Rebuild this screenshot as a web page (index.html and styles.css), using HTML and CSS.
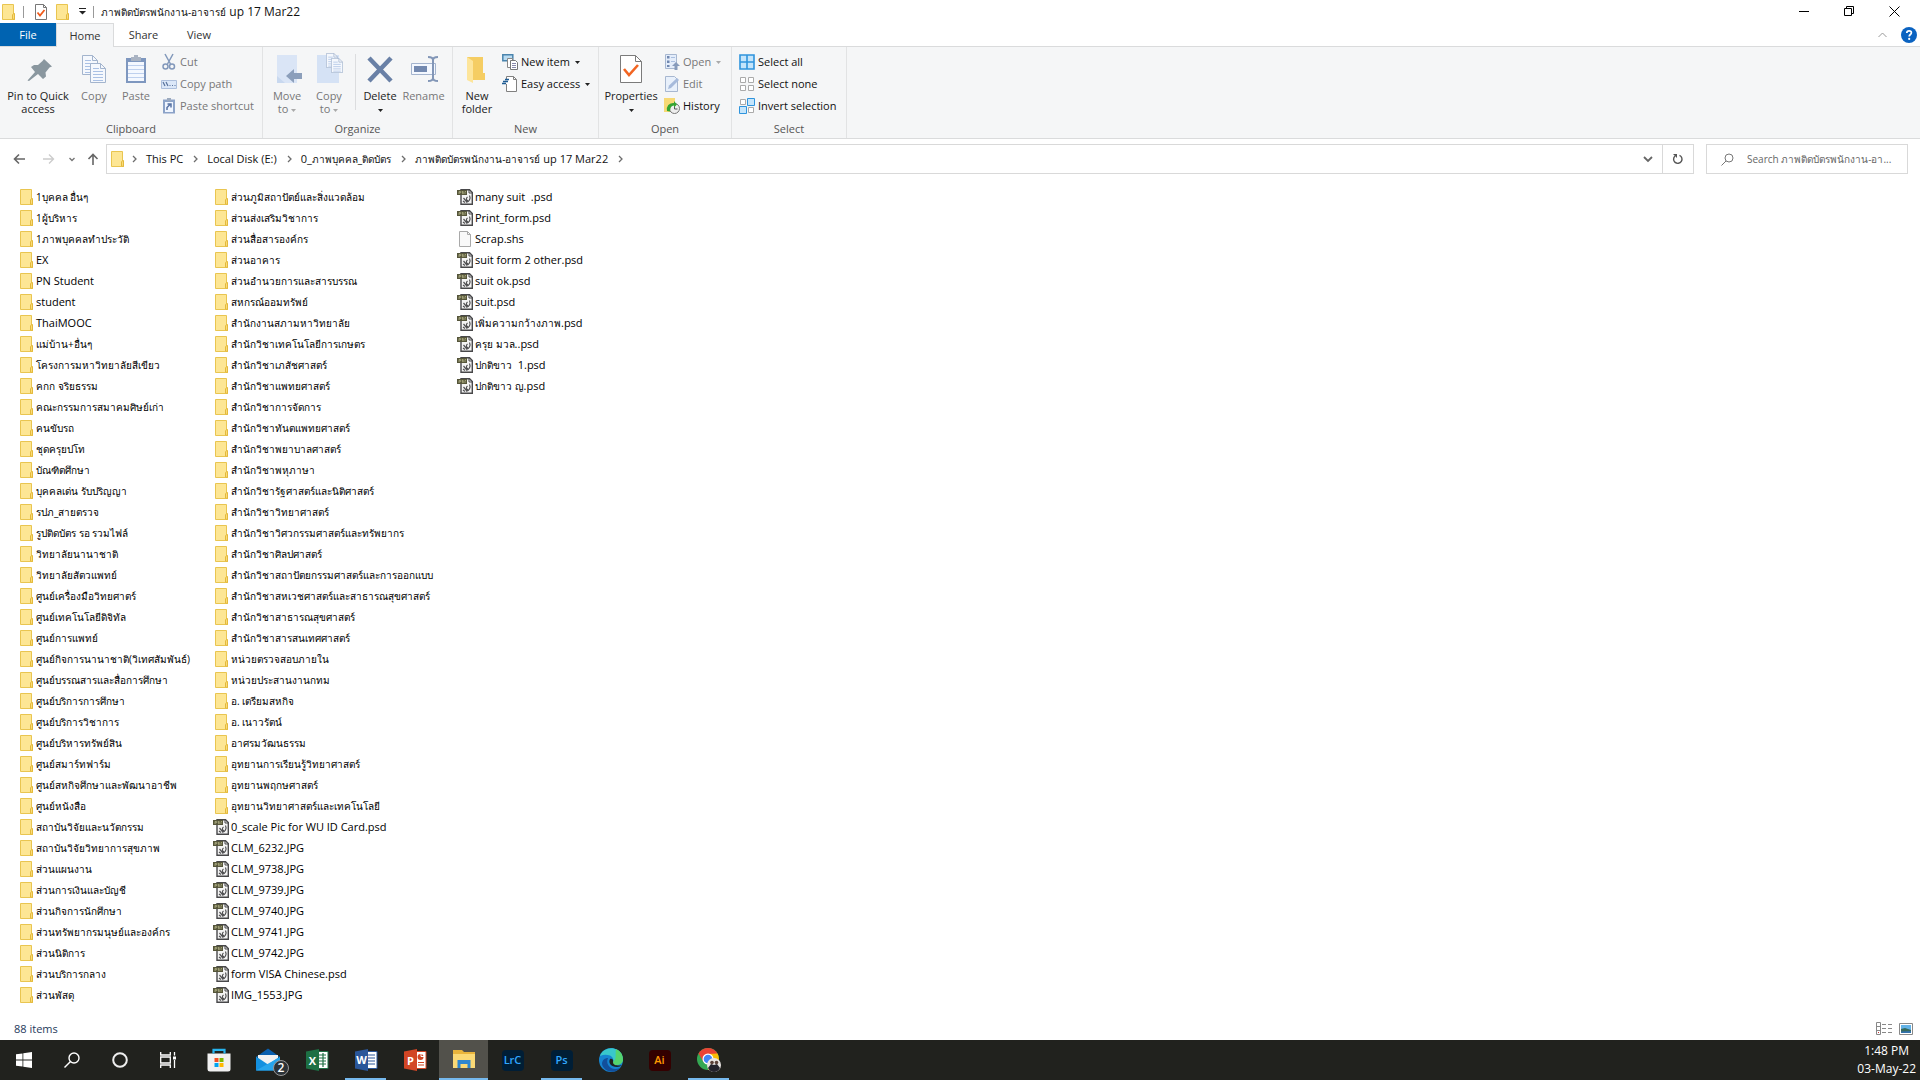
FILE: index.html
```html
<!DOCTYPE html>
<html lang="th">
<head>
<meta charset="utf-8">
<title>ภาพติดบัตรพนักงาน-อาจารย์ up 17 Mar22</title>
<link rel="stylesheet" href="styles.css">
</head>
<body>
<svg class="defs" aria-hidden="true">
  <symbol id="folder" viewBox="0 0 16 16"><path d="M2.5.5h11v12h1v3h-12z" fill="#fde694" stroke="#e9c550"/><path d="M12.5 15v-4l1-1.500h1v6z" fill="#fbdc78" stroke="#e3b93c"/></symbol>
  <symbol id="image" viewBox="0 0 16 16"><path d="M4 .7h8.500l2.800 2.800v11.800H4z" fill="#f4f4f4" stroke="#48484a" stroke-width="1.400"/><path d="M12 .7v3.300h3.300" fill="none" stroke="#48484a"/><path d="M0 1h10v5H0z" fill="#55553a"/><path d="M2 5V2.500h1.500v1.300H2M5 4.600h1.400V3.500H5V2.500h1.500M8 5V2.500M8 2.500h1" fill="none" stroke="#b9b98c" stroke-width=".7"/><path d="M6.500 9l2.500 3 1.500-.6M10.500 8c-2 1.500-1 3.500.5 3.500M12.500 6.500c1.500 3-.5 7-3.500 6.500M6 12l2 1.500" fill="none" stroke="#505052" stroke-width="1.200"/></symbol>
  <symbol id="blank" viewBox="0 0 16 16"><path d="M2.500.5h8l3 3v12h-11z" fill="#f9f9f9" stroke="#a9a9a9"/><path d="M10.500.5v3h3" fill="none" stroke="#a9a9a9"/></symbol>
  <symbol id="caret" viewBox="0 0 5 3"><path d="M0 0h5L2.500 3z"/></symbol>
  <symbol id="next" viewBox="0 0 6 8"><path d="M1 1l3 3-3 3" fill="none" stroke="#6d6d6d" stroke-width="1.300"/></symbol>
  <symbol id="sheet" viewBox="0 0 16 20"><path d="M.5.5h10l5 5v14H.5z" fill="#f5f8fd" stroke="#a3b4cd"/><path d="M10.500.5v5h5" fill="none" stroke="#a3b4cd"/><path d="M3 5.500h6M3 8.500h10M3 11.500h10M3 14.500h10M3 17.500h10" stroke="#a9c0e4"/></symbol>
</svg>

<header class="titlebar">
  <svg class="i16" viewBox="0 0 16 16"><use href="#folder"/></svg>
  <span class="rule"></span>
  <button class="plain" aria-label="Properties"><svg class="i16" viewBox="0 0 16 16"><path d="M3.500.5h8l3 3v12h-11z" fill="#fff" stroke="#777"/><path d="M11.500.5v3h3" fill="none" stroke="#777"/><path d="M5.500 8.500l2.500 3 4.500-5.500" fill="none" stroke="#f05a1a" stroke-width="1.800"/></svg></button>
  <button class="plain" aria-label="New folder"><svg class="i16" viewBox="0 0 16 16"><use href="#folder"/></svg></button>
  <button class="plain custom" aria-label="Customize toolbar"><svg width="7" height="7" viewBox="0 0 7 7"><path d="M0 .5h7" stroke="#222"/><path d="M0 3h7L3.500 6.500z" fill="#222"/></svg></button>
  <span class="rule"></span>
  <h1><span class="th">ภาพติดบัตรพนักงาน-อาจารย์</span> up 17 Mar22</h1>
  <div class="window-buttons">
    <button class="plain" aria-label="Minimize"><svg width="11" height="11" viewBox="0 0 11 11"><path d="M0 5.500h10" stroke="#000"/></svg></button>
    <button class="plain" aria-label="Restore"><svg width="11" height="11" viewBox="0 0 11 11" fill="none" stroke="#000"><path d="M.5 2.500h7v7h-7zM2.500 2.500v-2h7v7h-2"/></svg></button>
    <button class="plain" aria-label="Close"><svg width="11" height="11" viewBox="0 0 11 11"><path d="M.5.5l10 10M10.500.5l-10 10" stroke="#000"/></svg></button>
  </div>
</header>

<nav class="tabs">
  <button class="tab file">File</button>
  <button class="tab active">Home</button>
  <button class="tab">Share</button>
  <button class="tab view">View</button>
  <div class="tabs-end">
    <button class="plain" aria-label="Minimize the Ribbon"><svg width="9" height="6" viewBox="0 0 9 6"><path d="M.5 5l4-4 4 4" fill="none" stroke="#999"/></svg></button>
    <button class="plain" aria-label="Help"><svg class="i16" viewBox="0 0 16 16"><circle cx="8" cy="8" r="8" fill="#0b63c1"/><path d="M5.800 6c0-3 4.600-2.800 4.600-.2 0 1.700-2.200 1.700-2.200 3.700" fill="none" stroke="#fff" stroke-width="1.700"/><circle cx="8.200" cy="11.900" r="1.100" fill="#fff"/></svg></button>
  </div>
</nav>

<section class="ribbon">
  <div class="group">
    <div class="tools">
      <button class="big wide"><svg class="i32" viewBox="0 0 32 32"><path d="M22 5l8 7.500-2.500 1-4 5 .5 4-3 2.500-5-5L7 27l-1.500-.5L13 18l-4-5 3-2h4l4.500-4z" fill="#8a979f"/></svg><span>Pin to Quick access</span></button>
      <button class="big off"><svg class="i32" viewBox="0 0 32 32"><use href="#sheet" x="4" y="1" width="16" height="20"/><use href="#sheet" x="12" y="9" width="16" height="20"/></svg><span>Copy</span></button>
      <button class="big off"><svg class="i32" viewBox="0 0 32 32"><path d="M6 4h20v25H6z" fill="#7e97bf"/><path d="M8 8h16v19H8z" fill="#f4f8ff"/><path d="M8 11.500h16M8 15.500h16M8 19.500h16M8 23.500h16" stroke="#bed0ee"/><path d="M11 3h3V1h4v2h3v4H11z" fill="#a9b3c2"/></svg><span>Paste</span></button>
      <div class="stack">
        <button class="small off"><svg class="i16" viewBox="0 0 16 16" fill="none" stroke="#8298bb" stroke-width="1.500"><path d="M4 0l5.500 10M12 0L6.500 10"/><circle cx="4.500" cy="12.500" r="2.500"/><circle cx="11" cy="12.500" r="2.500"/></svg>Cut</button>
        <button class="small off"><svg class="i16" viewBox="0 0 16 16"><path d="M.5 4.500h15v8H.5z" fill="#dbe7f8" stroke="#adbfdc"/><path d="M2 6l2 4M5 6l2 4M8.500 9.500h1M11 9.500h1M13.500 9.500h1" stroke="#58729c" stroke-width="1.200"/></svg>Copy path</button>
        <button class="small off"><svg class="i16" viewBox="0 0 16 16"><path d="M2 1.500h12v14H2z" fill="#8ca3c8"/><path d="M4 4h8v10H4z" fill="#eff5ff"/><path d="M6 0h4v3H6z" fill="#9caabe"/><path d="M6 12V9.500l3-3M6.500 6h3.500v3.500" fill="none" stroke="#5873a4" stroke-width="1.500"/></svg>Paste shortcut</button>
      </div>
    </div>
    <h2>Clipboard</h2>
  </div>
  <div class="group organize">
    <div class="tools">
      <button class="big off"><svg class="i32" viewBox="0 0 32 32"><path d="M6 1h20v28H6z" fill="#dae5f6"/><path d="M6 22l8 7H6z" fill="#c8d8ef"/><path d="M15 22l8-7v4h8v6h-8v4z" fill="#8c9fbb"/></svg><span>Move<br>to <svg class="caret"><use href="#caret"/></svg></span></button>
      <button class="big off"><svg class="i32" viewBox="0 0 32 32"><path d="M4 1h22v28H4z" fill="#d5e2f5"/><use href="#sheet" x="13" y="-1" width="12" height="15"/><use href="#sheet" x="18" y="4" width="12" height="15"/></svg><span>Copy<br>to <svg class="caret"><use href="#caret"/></svg></span></button>
      <span class="divider"></span>
      <button class="big"><svg class="i32" viewBox="0 0 32 32"><path d="M5 4l22 23M27 4L5 27" stroke="#6980a6" stroke-width="4.500"/></svg><span>Delete<br><svg class="caret"><use href="#caret"/></svg></span></button>
      <button class="big rename off"><svg class="i32" viewBox="0 0 32 32" fill="none"><path d="M3.500 9.500h24v11h-24z" fill="#f4f8ff" stroke="#a4b4ce"/><path d="M6 12h13v6H6z" fill="#7389b0"/><path d="M20 3q5 0 5 3v18q0 3-5 3M30 3q-5 0-5 3M30 27q-5 0-5-3" stroke="#8296b7" stroke-width="2"/></svg><span>Rename</span></button>
    </div>
    <h2>Organize</h2>
  </div>
  <div class="group new">
    <div class="tools">
      <button class="big"><svg class="i32" viewBox="0 0 32 32"><path d="M6 3h16v16h2v7H6z" fill="#f5cd63"/><path d="M6 3l6 4v22l-6-3z" fill="#fde59b"/></svg><span>New folder</span></button>
      <div class="stack">
        <button class="small"><svg class="i16" viewBox="0 0 16 16"><path d="M.8.800h10v6H.8z" fill="#b9dbf1" stroke="#4a84ad" stroke-width="1.500"/><path d="M5.500 4.500h5v9h-5z" fill="#fff" stroke="#888"/><path d="M8.500 6.500h5l2 2v7h-7z" fill="#fff" stroke="#777"/><path d="M10 9.500h4M10 11.500h4M10 13.500h4" stroke="#88a"/></svg>New item<svg class="caret"><use href="#caret"/></svg></button>
        <button class="small"><svg class="i16" viewBox="0 0 16 16"><path d="M4.500 3V.5h7l3 3v12h-10V8" fill="#fff" stroke="#808080"/><path d="M11.500.5v3h3" fill="none" stroke="#808080"/><path d="M3 3.500h4M1 5.500h5M0 7.500h4" stroke="#1f5c94" stroke-width="1.300"/></svg>Easy access<svg class="caret"><use href="#caret"/></svg></button>
      </div>
    </div>
    <h2>New</h2>
  </div>
  <div class="group open">
    <div class="tools">
      <button class="big props"><svg class="i32" viewBox="0 0 32 32"><path d="M5.500 1.500h15l6 6v21h-21z" fill="#fff" stroke="#7b7b7b"/><path d="M20.500 1.500v6h6" fill="none" stroke="#7b7b7b"/><path d="M9 15l5 6 9-10" fill="none" stroke="#f26522" stroke-width="2.600"/></svg><span>Properties<br><svg class="caret"><use href="#caret"/></svg></span></button>
      <div class="stack">
        <button class="small off"><svg class="i16" viewBox="0 0 16 16"><path d="M1.500.5h11v14h-11z" fill="#e4edfa" stroke="#a7b7d0"/><path d="M3 2h2.500v2.500H3zM3 6.500h2.500V9H3zM3 11h2.500v2H3z" fill="#7188b0"/><path d="M7 3.500h4M7 7.500h4" stroke="#aabfe0"/><path d="M8 12l4-4 4 4h-2.500v4h-3v-4z" fill="#879bbb"/></svg>Open<svg class="caret"><use href="#caret"/></svg></button>
        <button class="small off"><svg class="i16" viewBox="0 0 16 16"><path d="M1.500.5h9l3 3v12h-12z" fill="#e8f0fb" stroke="#a7b7d0"/><path d="M4 13l1-3.500L13 2l2 2-8 8z" fill="#a6badb"/></svg>Edit</button>
        <button class="small"><svg class="i16" viewBox="0 0 16 16"><path d="M0 0h11v14H0z" fill="#f7d975"/><circle cx="10.500" cy="10.500" r="5" fill="#eee" stroke="#777"/><path d="M10.500 7.500v3.500h3" fill="none" stroke="#555"/><path d="M3 13q-1-8 7-8v-2l3 3.500-3 3v-2q-4 0-4 6z" fill="#35a532"/></svg>History</button>
      </div>
    </div>
    <h2>Open</h2>
  </div>
  <div class="group select">
    <div class="tools">
      <div class="stack">
        <button class="small"><svg class="i16" viewBox="0 0 16 16"><path d="M1 1h14v14H1zM8 1v14M1 8h14" fill="#c5e5fb" stroke="#2f94dd" stroke-width="1.600"/></svg>Select all</button>
        <button class="small"><svg class="i16" viewBox="0 0 16 16" fill="#fff" stroke="#aaa"><path d="M1.500 1.500h5v5h-5zM9.500 1.500h5v5h-5zM1.500 9.500h5v5h-5zM9.500 9.500h5v5h-5z"/></svg>Select none</button>
        <button class="small"><svg class="i16" viewBox="0 0 16 16" fill="#fff" stroke="#aaa"><path d="M1.500 1.500h5v5h-5zM9.500 9.500h5v5h-5z"/><path d="M8.500.5h7v7h-7zM.5 8.500h7v7h-7z" fill="#c5e5fb" stroke="#2f94dd"/></svg>Invert selection</button>
      </div>
    </div>
    <h2>Select</h2>
  </div>
</section>

<div class="location">
  <button class="plain nav" aria-label="Back"><svg width="12" height="12" viewBox="0 0 12 12" fill="none" stroke="#666" stroke-width="1.600"><path d="M12 6H1.500M6 1.500L1.500 6 6 10.500"/></svg></button>
  <button class="plain nav" aria-label="Forward"><svg width="12" height="12" viewBox="0 0 12 12" fill="none" stroke="#ccc" stroke-width="1.400"><path d="M0 6h10.500M6 1.500L10.500 6 6 10.500"/></svg></button>
  <button class="plain recent" aria-label="Recent locations"><svg width="6" height="5" viewBox="0 0 6 5"><path d="M.5 1L3 3.500 5.500 1" fill="none" stroke="#777" stroke-width="1.400"/></svg></button>
  <button class="plain up" aria-label="Up"><svg width="12" height="12" viewBox="0 0 12 12" fill="none" stroke="#666" stroke-width="1.600"><path d="M6 12V1.500M1.500 6L6 1.500 10.500 6"/></svg></button>
  <div class="address">
    <svg class="i16" viewBox="0 0 16 16"><use href="#folder"/></svg>
    <svg class="next"><use href="#next"/></svg><a href="#">This PC</a>
    <svg class="next"><use href="#next"/></svg><a href="#">Local Disk (E:)</a>
    <svg class="next"><use href="#next"/></svg><a href="#">0_<span class="th">ภาพบุคคล_ติดบัตร</span></a>
    <svg class="next"><use href="#next"/></svg><a href="#"><span class="th">ภาพติดบัตรพนักงาน-อาจารย์</span> up 17 Mar22</a>
    <svg class="next"><use href="#next"/></svg>
    <button class="plain history" aria-label="Previous locations"><svg width="10" height="7" viewBox="0 0 10 7"><path d="M1 1l4 4 4-4" fill="none" stroke="#666" stroke-width="1.800"/></svg></button>
    <button class="plain refresh" aria-label="Refresh"><svg width="12" height="12" viewBox="0 0 12 12"><path d="M7.500 2.300A4.200 4.200 0 1 1 3 3" fill="none" stroke="#555" stroke-width="1.400"/><path d="M1 1h4v4z" fill="#555"/></svg></button>
  </div>
  <label class="search"><svg width="13" height="13" viewBox="0 0 13 13" fill="none" stroke="#777"><circle cx="8" cy="5" r="4"/><path d="M5 8L.5 12.500"/></svg><input type="text" aria-label="Search" placeholder="Search ภาพติดบัตรพนักงาน-อา..."></label>
</div>

<main class="files">
<ul class="column">
<li><svg><use href="#folder"/></svg>1บุคคล อื่นๆ</li>
<li><svg><use href="#folder"/></svg>1ผู้บริหาร</li>
<li><svg><use href="#folder"/></svg>1ภาพบุคคลทำประวัติ</li>
<li class="latin"><svg><use href="#folder"/></svg>EX</li>
<li class="latin"><svg><use href="#folder"/></svg>PN Student</li>
<li class="latin"><svg><use href="#folder"/></svg>student</li>
<li class="latin"><svg><use href="#folder"/></svg>ThaiMOOC</li>
<li><svg><use href="#folder"/></svg>แม่บ้าน+อื่นๆ</li>
<li><svg><use href="#folder"/></svg>โครงการมหาวิทยาลัยสีเขียว</li>
<li><svg><use href="#folder"/></svg>คกก จริยธรรม</li>
<li><svg><use href="#folder"/></svg>คณะกรรมการสมาคมศิษย์เก่า</li>
<li><svg><use href="#folder"/></svg>คนขับรถ</li>
<li><svg><use href="#folder"/></svg>ชุดครุยปโท</li>
<li><svg><use href="#folder"/></svg>บัณฑิตศึกษา</li>
<li><svg><use href="#folder"/></svg>บุคคลเด่น รับปริญญา</li>
<li><svg><use href="#folder"/></svg>รปภ_สายตรวจ</li>
<li><svg><use href="#folder"/></svg>รูปติดบัตร รอ รวมไฟล์</li>
<li><svg><use href="#folder"/></svg>วิทยาลัยนานาชาติ</li>
<li><svg><use href="#folder"/></svg>วิทยาลัยสัตวแพทย์</li>
<li><svg><use href="#folder"/></svg>ศูนย์เครื่องมือวิทยศาตร์</li>
<li><svg><use href="#folder"/></svg>ศูนย์เทคโนโลยีดิจิทัล</li>
<li><svg><use href="#folder"/></svg>ศูนย์การแพทย์</li>
<li><svg><use href="#folder"/></svg>ศูนย์กิจการนานาชาติ(วิเทศสัมพันธ์)</li>
<li><svg><use href="#folder"/></svg>ศูนย์บรรณสารและสื่อการศึกษา</li>
<li><svg><use href="#folder"/></svg>ศูนย์บริการการศึกษา</li>
<li><svg><use href="#folder"/></svg>ศูนย์บริการวิชาการ</li>
<li><svg><use href="#folder"/></svg>ศูนย์บริหารทรัพย์สิน</li>
<li><svg><use href="#folder"/></svg>ศูนย์สมาร์ทฟาร์ม</li>
<li><svg><use href="#folder"/></svg>ศูนย์สหกิจศึกษาและพัฒนาอาชีพ</li>
<li><svg><use href="#folder"/></svg>ศูนย์หนังสือ</li>
<li><svg><use href="#folder"/></svg>สถาบันวิจัยและนวัตกรรม</li>
<li><svg><use href="#folder"/></svg>สถาบันวิจัยวิทยาการสุขภาพ</li>
<li><svg><use href="#folder"/></svg>ส่วนแผนงาน</li>
<li><svg><use href="#folder"/></svg>ส่วนการเงินและบัญชี</li>
<li><svg><use href="#folder"/></svg>ส่วนกิจการนักศึกษา</li>
<li><svg><use href="#folder"/></svg>ส่วนทรัพยากรมนุษย์และองค์กร</li>
<li><svg><use href="#folder"/></svg>ส่วนนิติการ</li>
<li><svg><use href="#folder"/></svg>ส่วนบริการกลาง</li>
<li><svg><use href="#folder"/></svg>ส่วนพัสดุ</li>
</ul>
<ul class="column middle">
<li><svg><use href="#folder"/></svg>ส่วนภูมิสถาปัตย์และสิ่งแวดล้อม</li>
<li><svg><use href="#folder"/></svg>ส่วนส่งเสริมวิชาการ</li>
<li><svg><use href="#folder"/></svg>ส่วนสื่อสารองค์กร</li>
<li><svg><use href="#folder"/></svg>ส่วนอาคาร</li>
<li><svg><use href="#folder"/></svg>ส่วนอำนวยการและสารบรรณ</li>
<li><svg><use href="#folder"/></svg>สหกรณ์ออมทรัพย์</li>
<li><svg><use href="#folder"/></svg>สำนักงานสภามหาวิทยาลัย</li>
<li><svg><use href="#folder"/></svg>สำนักวิชาเทคโนโลยีการเกษตร</li>
<li><svg><use href="#folder"/></svg>สำนักวิชาเภสัชศาสตร์</li>
<li><svg><use href="#folder"/></svg>สำนักวิชาแพทยศาสตร์</li>
<li><svg><use href="#folder"/></svg>สำนักวิชาการจัดการ</li>
<li><svg><use href="#folder"/></svg>สำนักวิชาทันตแพทยศาสตร์</li>
<li><svg><use href="#folder"/></svg>สำนักวิชาพยาบาลศาสตร์</li>
<li><svg><use href="#folder"/></svg>สำนักวิชาพหุภาษา</li>
<li><svg><use href="#folder"/></svg>สำนักวิชารัฐศาสตร์และนิติศาสตร์</li>
<li><svg><use href="#folder"/></svg>สำนักวิชาวิทยาศาสตร์</li>
<li><svg><use href="#folder"/></svg>สำนักวิชาวิศวกรรมศาสตร์และทรัพยากร</li>
<li><svg><use href="#folder"/></svg>สำนักวิชาศิลปศาสตร์</li>
<li><svg><use href="#folder"/></svg>สำนักวิชาสถาปัตยกรรมศาสตร์และการออกแบบ</li>
<li><svg><use href="#folder"/></svg>สำนักวิชาสหเวชศาสตร์และสาธารณสุขศาสตร์</li>
<li><svg><use href="#folder"/></svg>สำนักวิชาสาธารณสุขศาสตร์</li>
<li><svg><use href="#folder"/></svg>สำนักวิชาสารสนเทศศาสตร์</li>
<li><svg><use href="#folder"/></svg>หน่วยตรวจสอบภายใน</li>
<li><svg><use href="#folder"/></svg>หน่วยประสานงานกทม</li>
<li><svg><use href="#folder"/></svg>อ. เตรียมสหกิจ</li>
<li><svg><use href="#folder"/></svg>อ. เนาวรัตน์</li>
<li><svg><use href="#folder"/></svg>อาศรมวัฒนธรรม</li>
<li><svg><use href="#folder"/></svg>อุทยานการเรียนรู้วิทยาศาสตร์</li>
<li><svg><use href="#folder"/></svg>อุทยานพฤกษศาสตร์</li>
<li><svg><use href="#folder"/></svg>อุทยานวิทยาศาสตร์และเทคโนโลยี</li>
<li class="latin"><svg><use href="#image"/></svg>0_scale Pic for WU ID Card.psd</li>
<li class="latin"><svg><use href="#image"/></svg>CLM_6232.JPG</li>
<li class="latin"><svg><use href="#image"/></svg>CLM_9738.JPG</li>
<li class="latin"><svg><use href="#image"/></svg>CLM_9739.JPG</li>
<li class="latin"><svg><use href="#image"/></svg>CLM_9740.JPG</li>
<li class="latin"><svg><use href="#image"/></svg>CLM_9741.JPG</li>
<li class="latin"><svg><use href="#image"/></svg>CLM_9742.JPG</li>
<li class="latin"><svg><use href="#image"/></svg>form VISA Chinese.psd</li>
<li class="latin"><svg><use href="#image"/></svg>IMG_1553.JPG</li>
</ul>
<ul class="column">
<li class="latin"><svg><use href="#image"/></svg>many suit  .psd</li>
<li class="latin"><svg><use href="#image"/></svg>Print_form.psd</li>
<li class="latin"><svg><use href="#blank"/></svg>Scrap.shs</li>
<li class="latin"><svg><use href="#image"/></svg>suit form 2 other.psd</li>
<li class="latin"><svg><use href="#image"/></svg>suit ok.psd</li>
<li class="latin"><svg><use href="#image"/></svg>suit.psd</li>
<li class="latin"><svg><use href="#image"/></svg><span><span class="th">เพิ่มความกว้างภาพ</span>.psd</span></li>
<li class="latin"><svg><use href="#image"/></svg><span><span class="th">ครุย มวล</span>..psd</span></li>
<li class="latin"><svg><use href="#image"/></svg><span><span class="th">ปกติขาว</span>  1.psd</span></li>
<li class="latin"><svg><use href="#image"/></svg><span><span class="th">ปกติขาว ญ</span>.psd</span></li>
</ul>
</main>

<footer class="status">
  <span>88 items</span>
  <div class="views">
    <button class="plain" aria-label="Details view"><svg width="17" height="13" viewBox="0 0 17 13" fill="none" stroke="#888"><path d="M.5.5h4v12h-4zM.5 4.500h4M.5 8.500h4M6 2.500h4M12 2.500h4M6 6.500h4M12 6.500h4M6 10.500h4M12 10.500h4"/><path d="M2 10.500h1" stroke="#c33"/></svg></button>
    <button class="plain" aria-label="Large thumbnails"><svg width="14" height="12" viewBox="0 0 14 12"><path d="M.5.5h13v11H.5z" fill="#fff" stroke="#888"/><path d="M2 2h10v8H2z" fill="#63b3e8"/><path d="M2 6l4-1 6 2v3H2z" fill="#376a5c"/><path d="M2 8.500l10-.5v2H2z" fill="#3272ad"/></svg></button>
  </div>
</footer>

<nav class="taskbar">
  <button class="app sys" aria-label="Start"><svg width="16" height="16" viewBox="0 0 16 16"><path d="M0 2.300l6.500-.9v6.200H0zM7.300 1.300L16 0v7.600H7.300zM0 8.400h6.500v6.200L0 13.700zM7.300 8.400H16V16l-8.700-1.300z" fill="#fff"/></svg></button>
  <button class="app sys" aria-label="Search"><svg width="16" height="16" viewBox="0 0 16 16" fill="none" stroke="#fff" stroke-width="1.400"><circle cx="10" cy="6" r="5"/><path d="M6.500 9.500l-6 6"/></svg></button>
  <button class="app sys" aria-label="Cortana"><svg width="16" height="16" viewBox="0 0 16 16"><circle cx="8" cy="8" r="6.800" fill="none" stroke="#eee" stroke-width="2"/></svg></button>
  <button class="app sys" aria-label="Task View"><svg width="16" height="16" viewBox="0 0 16 16" fill="none" stroke="#fff" stroke-width="1.300"><path d="M.7 0v3h9.600V0M.7 16v-3h9.600v3M.7 5h9.600v6H.7zM14.500 0v3.500M14.500 8v8"/><path d="M13 4.500h3v3h-3z" fill="#fff" stroke="none"/></svg></button>
  <div class="apps">
    <button class="app" aria-label="Microsoft Store"><svg width="24" height="24" viewBox="0 0 24 24"><path d="M.5 5.500h23V21q0 2.500-2.500 2.500H3Q.5 23.500.5 21z" fill="#f1f1f1"/><path d="M6.500 5.500v-3.700h11v3.700" fill="none" stroke="#27b4ee" stroke-width="2.200"/><path d="M7.500 10h4v4h-4z" fill="#f25022"/><path d="M12.500 10h4v4h-4z" fill="#7fba00"/><path d="M7.500 15h4v4h-4z" fill="#00a4ef"/><path d="M12.500 15h4v4h-4z" fill="#ffb900"/></svg></button>
    <button class="app" aria-label="Mail, 2 new"><svg width="24" height="24" viewBox="0 0 24 24"><path d="M0 9l12-8.500L24 9z" fill="#0a5fae"/><path d="M2 7h20v9H2z" fill="#f2f2f2"/><path d="M0 8.500l12 8 12-8V22.500H0z" fill="#1490df"/><path d="M0 22.500L24 9v13.500z" fill="#27a5ec"/></svg><span class="badge">2</span></button>
    <button class="app" aria-label="Excel"><svg width="24" height="24" viewBox="0 0 24 24"><path d="M12 3.500h11v17H12z" fill="#fff" stroke="#1d7044"/><path d="M14 7h7M14 10h7M14 13h7M14 16h7M18 5v14" stroke="#1d7044" stroke-width="1.200"/><path d="M1 3.500L14 1v22L1 20.500z" fill="#1d7044"/><text x="7.500" y="16.500">X</text></svg></button>
    <button class="app running" aria-label="Word"><svg width="24" height="24" viewBox="0 0 24 24"><path d="M12 3.500h11v17H12z" fill="#fff" stroke="#2a5699"/><path d="M14 7h7M14 10h7M14 13h7M14 16h7" stroke="#2a5699" stroke-width="1.200"/><path d="M1 3.500L14 1v22L1 20.500z" fill="#2a5699"/><text x="7.500" y="16">W</text></svg></button>
    <button class="app" aria-label="PowerPoint"><svg width="24" height="24" viewBox="0 0 24 24"><path d="M12 3.500h11v17H12z" fill="#fff" stroke="#d24625"/><circle cx="17.500" cy="9" r="3" fill="#d24625"/><path d="M18 8.500V5M18 8.500h4" stroke="#fff"/><path d="M15 14.500h6M15 17h6" stroke="#d24625" stroke-width="1.200"/><path d="M1 3.500L14 1v22L1 20.500z" fill="#d24625"/><text x="7.500" y="16.500">P</text></svg></button>
    <button class="app current" aria-label="File Explorer"><svg width="24" height="24" viewBox="0 0 24 24"><path d="M1 3h9l2 2h11v16H1z" fill="#e9b43c"/><path d="M1 7h22v14H1z" fill="#fbd975"/><path d="M5.500 21v-8h13v8h-3v-4h-7v4z" fill="#2e86d0"/></svg></button>
    <button class="app" aria-label="Lightroom Classic"><span class="tile">LrC</span></button>
    <button class="app running" aria-label="Photoshop"><span class="tile">Ps</span></button>
    <button class="app" aria-label="Edge"><svg width="24" height="24" viewBox="0 0 24 24"><circle cx="12" cy="12" r="12" fill="#1684d0"/><path d="M1 8C4-1 18-3 23 7c2 6-1 10-6 10-3 0-4-1-3-3 2-6-6-9-13-6z" fill="#39c8cb"/><path d="M17 1.200c5 2 7 6 7 10.800 0 3-3 5-7 5-3 0-4-1-3-3 4-3 2-8 3-12.800z" fill="#55d46e"/><path d="M9 10c-3 6 3 14 12 10-6 7-17 3-18-4 0-4 3-6 6-6z" fill="#124f9b"/><path d="M11 11c-2 4 1 8 7 8 2 0 4-1 5-2-3 1-9 1-9-3 1-2-1-4-3-3z" fill="#20221f"/></svg></button>
    <button class="app" aria-label="Illustrator"><span class="tile ai">Ai</span></button>
    <button class="app running" aria-label="Chrome"><svg width="24" height="24" viewBox="0 0 24 24"><circle cx="11" cy="11" r="11" fill="#34a853"/><path d="M1.500 5.500A11 11 0 0 1 20.500 5.500L11 11z" fill="#ea4335"/><path d="M1.500 5.500L6.500 14l4.500-3V5.500h9.500z" fill="#ea4335"/><path d="M20.500 5.500A11 11 0 0 1 11 22l5-8.500-5-7.500z" fill="#fbbc05"/><circle cx="11" cy="11" r="5.500" fill="#fff"/><circle cx="11" cy="11" r="4.300" fill="#4285f4"/><circle cx="17" cy="17" r="7" fill="#e9e4e2"/><path d="M11 20l3-4 3 1 3-1 3 4q-2 4-6 4t-6-4z" fill="#24222c"/><circle cx="15" cy="14.500" r="1.800" fill="#5b4038"/><circle cx="19.500" cy="14.500" r="1.800" fill="#5b4038"/></svg></button>
  </div>
  <button class="clock">1:48 PM<br>03-May-22</button>
</nav>
</body>
</html>
```
FILE: styles.css
```css
* { box-sizing: border-box; }

body {
  margin: 0;
  min-height: 100vh;
  display: flex;
  flex-direction: column;
  background: #fff;
  color: #111;
  font: 11px/16px "Open Sans", "Noto Sans", sans-serif;
}

button {
  border: 0;
  padding: 0;
  background: none;
  color: inherit;
  font: inherit;
}

svg { display: block; flex: none; overflow: visible; }
a { color: inherit; text-decoration: none; }
h1, h2 { margin: 0; font-size: inherit; font-weight: 400; }

.defs { display: none; }
.i16 { width: 16px; height: 16px; }
.i32 { width: 32px; height: 32px; }
.plain { display: flex; align-items: center; justify-content: center; }
.th { font-size: 10px; }

/* Title bar */
.titlebar { display: flex; align-items: center; height: 23px; }
.titlebar h1 { font-size: 12px; }
.rule { width: 1px; height: 12px; margin: 0 8px 0 7px; background: #999; }
.titlebar .plain + .plain { margin-left: 6px; }
.titlebar .custom { width: 12px; }
.titlebar .custom + .rule { margin: 0 7px 0 5px; }
.window-buttons { display: flex; margin: 0 3px 0 auto; }
.window-buttons .plain, .titlebar .window-buttons .plain + .plain { width: 45px; height: 23px; margin: 0; }

/* Ribbon tabs */
.tabs { display: flex; height: 24px; border-bottom: 1px solid #dadbdc; }
.tab { width: 59px; height: 23px; color: #333; }
.tab.file { width: 56px; background: #0063b1; color: #fff; }
.tab.active { width: 58px; height: 24px; border: 1px solid #dadbdc; border-bottom: 0; background: #f5f6f7; }
.tab.view { width: 52px; }
.tabs-end { display: flex; align-items: center; gap: 14px; margin-left: auto; padding-right: 3px; }

/* Ribbon */
.ribbon { display: flex; height: 92px; border-bottom: 1px solid #dadbdc; background: #f5f6f7; }
.group { display: flex; flex-direction: column; width: 263px; padding: 4px 3px 0; border-right: 1px solid #e2e3e4; }
.group.organize { width: 190px; }
.group.new { width: 146px; }
.group.open { width: 133px; }
.group.select { width: 115px; }
.tools { display: flex; height: 70px; }
.group h2 { color: #555; text-align: center; }
.big { display: flex; flex: none; flex-direction: column; align-items: center; gap: 3px; width: 42px; padding-top: 3px; line-height: 13px; color: #222; }
.big.wide { width: 70px; }
.big.props { width: 58px; }
.big.rename { width: 45px; }
.big .caret { display: inline-block; vertical-align: middle; }
.big.off, .off { color: #777; }
.off .caret { fill: #aaa; }
.caret { width: 5px; height: 3px; fill: #222; }
.divider { width: 1px; height: 56px; margin: 3px 3px 0 5px; background: #dcdddf; }
.stack { display: flex; flex-direction: column; margin-left: 4px; }
.small { display: flex; align-items: center; height: 22px; white-space: nowrap; }
.small .i16 { margin-right: 3px; }
.small .caret { margin-left: 5px; }

/* Address row */
.location { display: flex; align-items: center; height: 40px; padding: 0 12px 0 4px; }
.nav { width: 30px; height: 30px; }
.recent { width: 16px; height: 30px; }
.up { width: 26px; height: 30px; }
.address { display: flex; flex: 1; align-items: center; height: 30px; border: 1px solid #d9d9d9; }
.address .i16 { margin: 0 1px 0 2px; }
.next { width: 6px; height: 8px; margin: 0 8px 0 6px; }
.address a + .next { margin-left: 10px; }
.history { width: 28px; height: 28px; margin-left: auto; }
.refresh { width: 31px; height: 28px; border-left: 1px solid #d9d9d9; }
.search { display: flex; align-items: center; gap: 13px; width: 202px; height: 30px; margin-left: 12px; padding-left: 14px; border: 1px solid #d9d9d9; }
.search input { flex: 1; min-width: 0; border: 0; padding: 0; outline: 0; background: none; font: inherit; font-size: 10px; }
.search input::placeholder { color: #666; opacity: 1; }

/* File list */
.files { display: flex; flex: 1; padding: 7px 18px; }
.column { width: 195px; margin: 0; padding: 0; list-style: none; }
.column.middle { width: 244px; }
.column li { display: flex; align-items: center; height: 21px; color: #000; font-size: 10px; white-space: pre; }
.column li.latin { font-size: 11px; }
.column svg { width: 16px; height: 16px; margin-right: 2px; }

/* Status bar */
.status { display: flex; align-items: center; justify-content: space-between; height: 23px; padding: 0 7px 0 14px; color: #1e395b; }
.views { display: flex; gap: 6px; }

/* Taskbar */
.taskbar { display: flex; height: 40px; background: #21221e; color: #fff; font-size: 12px; }
.apps { display: flex; margin-left: 2px; }
.app { position: relative; display: flex; align-items: center; justify-content: center; width: 49px; height: 40px; }
.app.sys { width: 48px; }
.app text { fill: #fff; font: 700 11px "Open Sans", sans-serif; text-anchor: middle; }
.app.running::after { content: ""; position: absolute; inset: auto 4px 0; height: 2px; background: #76b9ed; }
.app.current { border-bottom: 2px solid #76b9ed; background: #52514b; }
.badge { position: absolute; right: 3px; bottom: 4px; width: 16px; height: 16px; border: 1px solid #999; border-radius: 50%; background: #2c3338; font-weight: 600; line-height: 14px; }
.tile { width: 22px; height: 21px; border-radius: 4px; background: #001e36; color: #31a8ff; font-size: 11px; font-weight: 600; line-height: 19px; }
.tile.ai { background: #330000; color: #ff9a00; }
.clock { margin-left: auto; padding-right: 4px; line-height: 18px; }
```
